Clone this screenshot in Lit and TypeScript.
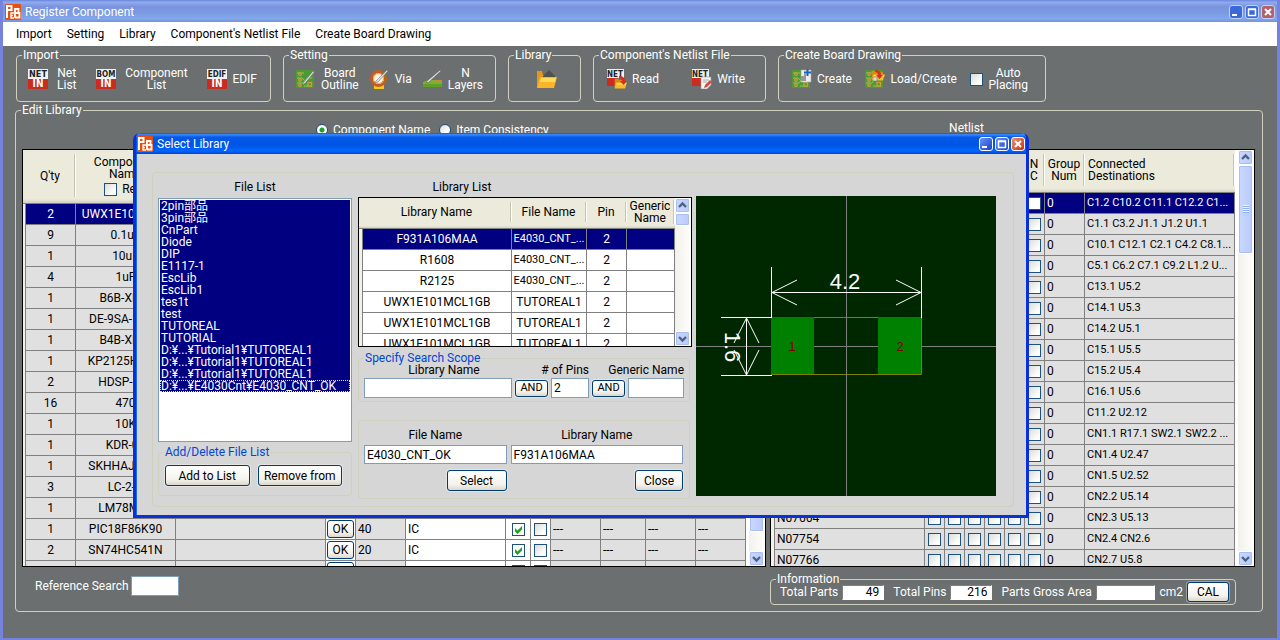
import { LitElement, html, css, svg, nothing } from "lit";
import { customElement, property } from "lit/decorators.js";
import { classMap } from "lit/directives/class-map.js";

const controls = css`
  * { box-sizing: border-box; }
  button, input { font: inherit; color: inherit; margin: 0; }
  fieldset { margin: 0; padding: 0; min-width: 0; border: 1px solid #d0d0bf; border-radius: 4px; }
  legend { margin-left: 5px; padding: 0 1px; line-height: 12px; }
  .push {
    height: 21px; padding: 0 6px; border: 1px solid #003c74; border-radius: 3px; color: #000;
    background: linear-gradient(#fff, #f4f3ee 70%, #dcd7cb); line-height: 12px; white-space: nowrap;
    box-shadow: 0 0 0 1px rgba(255, 255, 255, 0.35);
  }
  .field { height: 20px; min-width: 0; padding: 0 2px; border: 1px solid #7f9db9; border-radius: 0; background: #fff; color: #000; }
  .tick {
    appearance: none; flex: none; display: block; width: 13px; height: 13px; border: 1px solid #1c5180; border-radius: 0;
    background: linear-gradient(135deg, #dcdcd7, #fff 80%);
  }
  .tick:checked {
    background: url("data:image/svg+xml,%3Csvg xmlns='http://www.w3.org/2000/svg' viewBox='0 0 11 11'%3E%3Cpath d='M2 4v3.500L4.500 10 9 5.500V2L4.500 6.500z' fill='%2321a121'/%3E%3C/svg%3E") center / 11px 11px no-repeat, #fff;
  }
  .radio {
    appearance: none; width: 12px; height: 12px; border: 1px solid #1c5180; border-radius: 50%;
    background: linear-gradient(135deg, #dcdcd7, #fff 70%);
  }
  .radio:checked { background: radial-gradient(circle, #21a121 0 2px, #fff 3px); }
`;

@customElement("caption-buttons")
class CaptionButtons extends LitElement {
  @property({ type: Boolean, reflect: true }) active = false;
  static styles = css`
    :host { display: flex; gap: 2px; }
    button { width: 14px; height: 14px; padding: 0; border: 1px solid #c3d3fb; border-radius: 3px; background: #3a69dc; }
    button svg { display: block; width: 12px; height: 12px; }
    .close { background: #b4606a; }
    :host([active]) button { border-color: #fff; background: linear-gradient(135deg, #6b93f5, #1941c8); }
    :host([active]) .close { background: linear-gradient(135deg, #ee8f74, #c9310c); }
  `;
  render() {
    return html`
      <button aria-label="Minimize"><svg viewBox="0 0 12 12"><path d="M2 8h5v2H2z" fill="#fff" /></svg></button>
      <button aria-label="Maximize"><svg viewBox="0 0 12 12"><path d="M2.500 3.500h7v6h-7zM2 3h8" fill="none" stroke="#fff" stroke-width="1.500" /></svg></button>
      <button class="close" aria-label="Close window"><svg viewBox="0 0 12 12"><path d="M3 3l6 6M9 3l-6 6" stroke="#fff" stroke-width="2" /></svg></button>
    `;
  }
}

@customElement("scroll-bar")
class ScrollBar extends LitElement {
  @property({ type: Number }) length = 0;
  @property({ type: Boolean }) grip = false;
  static styles = css`
    :host { display: flex; flex-direction: column; flex: none; width: 16px; background: linear-gradient(90deg, #f3f1ec, #fefefb); }
    button, .thumb { border: 1px solid #fff; border-radius: 2px; background: linear-gradient(90deg, #c9d8fd, #b9cbfa); box-shadow: inset 0 0 0 1px #a9bff2; }
    button { flex: none; width: 15px; height: 15px; padding: 0; }
    button svg { display: block; width: 13px; height: 13px; }
    .track { flex: 1; min-height: 0; }
    .thumb { display: flex; align-items: center; justify-content: center; width: 15px; box-sizing: border-box; }
    .lines { width: 6px; height: 8px; background: repeating-linear-gradient(#eef4fe 0 1px, #8cb0f8 1px 2px); }
  `;
  render() {
    return html`
      <button aria-label="Scroll up"><svg viewBox="0 0 13 13"><path d="M3 8l3.500-3.500L10 8" fill="none" stroke="#4d6185" stroke-width="2.400" /></svg></button>
      <div class="track">
        <div class="thumb" style="height:${this.length}%">${this.grip ? html`<div class="lines"></div>` : nothing}</div>
      </div>
      <button aria-label="Scroll down"><svg viewBox="0 0 13 13"><path d="M3 5l3.500 3.500L10 5" fill="none" stroke="#4d6185" stroke-width="2.400" /></svg></button>
    `;
  }
}

const logo = html`<svg class="logo" viewBox="0 0 16 16" aria-hidden="true">
  <rect width="16" height="16" rx="1" fill="#e84e0c" />
  <g fill="none" stroke="#fff"><path d="M2 14V2h4.500v4H2" stroke-width="2" /><path d="M9 9H6v5h3M6 11.500h2" stroke-width="1.300" /><path d="M10 14V5h3.500v4H10M10 9h4.500v4.500H10" stroke-width="1.800" /></g>
</svg>`;

const word = (text: string, x: number, y: number, size: number, fill: string) => svg`
  <text x=${x} y=${y} text-anchor="middle" font-family="DejaVu Sans Condensed, Liberation Sans" font-weight="bold" font-size=${size} fill=${fill}>${text}</text>`;

const tagIcon = (text: string, size: number) => html`<svg class="icon" viewBox="0 0 20 20" aria-hidden="true">
  <rect width="20" height="10" fill="#f2f2f2" /><rect y="10" width="20" height="10" fill="#cb2c20" />
  ${word(text, 10, 8, size, "#222")}${word("IN", 10, 18, 10, "#fff")}
</svg>`;

const boardShape = svg`<rect y="1" width="18" height="18" fill="#4b9a35" />
  <path d="M1 4h7M1 9h5l3 3M1 14h6l4-5h5M8 17h8" stroke="#85c95a" fill="none" />
  <g fill="#4b9a35" stroke="#d59a3c" stroke-width="1.300"><circle cx="4" cy="5" r="1.300" /><circle cx="4" cy="11" r="1.300" /><circle cx="4" cy="16" r="1.300" /><rect x="12" y="13.500" width="3.500" height="3.500" /></g>`;
const pen = svg`<path d="M7 14L17 2l1.500 1L9 14.500l-3 1.500z" fill="#ddd" stroke="#666" stroke-width=".6" />`;
const folder = svg`<path d="M1 3h6l1 2h9v13H1z" fill="#d98914" /><path d="M3 9h17l-3 10H1z" fill="#fdb928" /><path d="M4 10h15l-1 3H4z" fill="#ffd95c" />`;
const arrow = svg`<path d="M10 1c4 0 6 2 6 5h2l-3.500 4L11 6h2c0-2-1-3-3-3z" fill="#d62f22" />`;

const icons: Record<string, unknown> = {
  net: tagIcon("NET", 9),
  bom: tagIcon("BOM", 8),
  edif: tagIcon("EDIF", 8),
  board: html`<svg class="icon" viewBox="0 0 20 20">${boardShape}${pen}</svg>`,
  via: html`<svg class="icon" viewBox="0 0 20 20"><path d="M10 4h8v9h-5z" fill="#3f8f31" /><path d="M4 16h10v4H4z" fill="#f5c81c" />
    <circle cx="8.500" cy="9.500" r="7" fill="#fff1dc" stroke="#c55b23" stroke-width="3" /><circle cx="8.500" cy="9.500" r="5" fill="none" stroke="#e8a33a" /><path d="M6 12L17 1l1 1L8 13l-3 1z" fill="#ddd" stroke="#777" stroke-width=".6" /></svg>`,
  layers: html`<svg class="icon" viewBox="0 0 20 20"><path d="M0 13l5-2h14v6H0z" fill="#74b52c" /><path d="M0 15h19v3H0z" fill="#5f9f26" /><path d="M11 11h8v2h-8z" fill="#c08c3c" /><path d="M4 12L17 1l1 1L6 13l-3 1z" fill="#ddd" stroke="#555" stroke-width=".5" /></svg>`,
  open: html`<svg class="icon" viewBox="0 0 20 20"><path d="M0 2h5l1 4h10v12H0z" fill="#e8951c" /><path d="M6 7l6-6 6 6v3H6z" fill="#505050" /><path d="M3 8h17l-3 11H0z" fill="#fcb526" /><path d="M4 9h15l-1 4H3z" fill="#ffdb55" /></svg>`,
  read: html`<svg class="icon" viewBox="0 0 20 20"><rect width="17" height="9" fill="#f2f2f2" /><rect y="9" width="11" height="8" fill="#cb2c20" />${word("NET", 8, 8, 8, "#222")}
    <g transform="translate(7 8) scale(.65 .6)">${folder}</g><g transform="translate(2 6)">${arrow}</g></svg>`,
  write: html`<svg class="icon" viewBox="0 0 20 20"><rect width="17" height="9" fill="#f2f2f2" /><rect y="9" width="9" height="8" fill="#cb2c20" />${word("NET", 8, 8, 8, "#222")}
    <path d="M9 8h10v8l-4 4H9z" fill="#f5f5f5" stroke="#999" stroke-width=".6" /><path d="M11 11h6M11 13h4" stroke="#aaa" /><path d="M18 11l2 2-5 5-3 1 1-3z" fill="#d8483a" /></svg>`,
  create: html`<svg class="icon" viewBox="0 0 20 20">${boardShape}<path d="M9 1h10v12H9z" fill="#eee" stroke="#aaa" stroke-width=".6" /><path d="M9 10V7h3V5h2v7H9z" fill="#999" /><path d="M15.500 0v7M12 3.500h7" stroke="#1767b5" stroke-width="2" /></svg>`,
  load: html`<svg class="icon" viewBox="0 0 20 20">${boardShape}<g transform="translate(6 0) scale(.7 .6)">${folder}</g><path d="M8 8h4v4H8z" fill="#ddd" stroke="#777" stroke-width=".6" />${arrow}</svg>`,
};

const tool = (icon: string, lines: string[], wide = false) => html`
  <button class=${classMap({ tool: true, wide })} aria-label=${lines.join(" ") || "Library"}>
    ${icons[icon]}${lines.length ? html`<span>${lines.map((l, i) => html`${i ? html`<br />` : nothing}${l}`)}</span>` : nothing}
  </button>`;

interface Part { qty: number | string; name: string; pins?: number; type?: string; }
const parts: Part[] = [
  { qty: 2, name: "UWX1E101MC..." }, { qty: 9, name: "0.1uF" }, { qty: 1, name: "10uF" }, { qty: 4, name: "1uF" },
  { qty: 1, name: "B6B-XH-A" }, { qty: 1, name: "DE-9SA-1A3N" }, { qty: 1, name: "B4B-XH-A" }, { qty: 1, name: "KP2125HS-A3" },
  { qty: 2, name: "HDSP-521" }, { qty: 16, name: "470" }, { qty: 1, name: "10K" }, { qty: 1, name: "KDR-08" },
  { qty: 1, name: "SKHHAJA010" }, { qty: 3, name: "LC-2-G" }, { qty: 1, name: "LM78M05" },
  { qty: 1, name: "PIC18F86K90", pins: 40, type: "IC" }, { qty: 2, name: "SN74HC541N", pins: 20, type: "IC" }, { qty: "", name: "" },
];

const nets: [string, string][] = [
  ["", "C1.2 C10.2 C11.1 C12.2 C1..."], ["", "C1.1 C3.2 J1.1 J1.2 U1.1"], ["", "C10.1 C12.1 C2.1 C4.2 C8.1..."],
  ["", "C5.1 C6.2 C7.1 C9.2 L1.2 U..."], ["", "C13.1 U5.2"], ["", "C14.1 U5.3"], ["", "C14.2 U5.1"],
  ["", "C15.1 U5.5"], ["", "C15.2 U5.4"], ["", "C16.1 U5.6"], ["", "C11.2 U2.12"],
  ["", "CN1.1 R17.1 SW2.1 SW2.2 ..."], ["", "CN1.4 U2.47"], ["", "CN1.5 U2.52"], ["", "CN2.2 U5.14"],
  ["N07664", "CN2.3 U5.13"], ["N07754", "CN2.4 CN2.6"], ["N07766", "CN2.7 U5.8"],
];

const libraries = [
  ["F931A106MAA", "E4030_CNT_..."], ["R1608", "E4030_CNT_..."], ["R2125", "E4030_CNT_..."],
  ["UWX1E101MCL1GB", "TUTOREAL1"], ["UWX1E101MCL1GB", "TUTOREAL1"], ["UWX1E101MCL1GB", "TUTOREAL1"],
];

const files = [
  "2pin部品", "3pin部品", "CnPart", "Diode", "DIP", "E1117-1", "EscLib", "EscLib1", "tes1t", "test", "TUTOREAL", "TUTORIAL",
  "D:¥...¥Tutorial1¥TUTOREAL1", "D:¥...¥Tutorial1¥TUTOREAL1", "D:¥...¥Tutorial1¥TUTOREAL1", "D:¥...¥E4030Cnt¥E4030_CNT_OK",
];

const tableStyles = css`
  .grid { display: flex; min-height: 0; overflow: hidden; border: 1px solid #000; background: #fff; }
  .rows { flex: 1; min-width: 0; overflow: hidden; color: #000; }
  .grid > .gap { margin-left: 3px; }
  table { width: 100%; table-layout: fixed; border-collapse: separate; border-spacing: 0; line-height: 12px; }
  th, td { padding: 0; overflow: hidden; white-space: nowrap; text-align: center; }
  th { font-weight: normal; background: linear-gradient(#ebeadb 92%, #d6d2c2); color: #000; border-bottom: 1px solid #808080; }
  th > div { display: flex; flex-direction: column; align-items: center; justify-content: center; gap: 3px; border-right: 1px solid #c7c5b2; box-shadow: 1px 0 #fff; margin: 4px 1px 6px 0; }
  th > div.start { align-items: flex-start; padding-left: 3px; text-align: left; }
  td { height: 21px; border-right: 1px solid #808080; border-bottom: 1px solid #808080; background: #e0e0e0; }
  td.left { text-align: left; padding-left: 2px; }
  td.small { font-size: 11px; }
  td.white, .light td { background: #fff; }
  .picked td, .light .picked td { background: #000080; color: #fff; }
  .picked .tick { background: #fff; }
  td.lead, .picked td.lead, .light .picked td.lead { background: #f4f2e8; border-bottom: 0; }
  td .tick { margin: 0 auto; }
`;

@customElement("select-library")
class SelectLibrary extends LitElement {
  static styles = [controls, tableStyles, css`
    :host { display: block; border: 3px solid #0831d9; border-top: 0; border-radius: 7px 7px 0 0; background: #d6d6d6; box-shadow: inset 1px 0 #166aee; }
    .title { display: flex; align-items: center; gap: 4px; height: 21px; padding: 0 1px; border-radius: 5px 5px 0 0; color: #fff;
      background: linear-gradient(#0a4fe0, #3a8cf8 8%, #0558e8 20%, #0054e3 55%, #0066ff 85%, #0045d0); }
    .title b { flex: 1; font-weight: normal; }
    .logo { width: 16px; height: 16px; }
    .body { margin: 18px 12px 8px 16px; padding: 8px 17px 7px 5px; border: 1px solid #d0d0bf; border-radius: 4px;
      display: grid; grid-template-columns: 196px minmax(0, 1fr) 300px; column-gap: 4px; }
    .col { display: flex; flex-direction: column; min-width: 0; }
    .side { padding-right: 2px; }
    .caption { height: 16px; text-align: center; line-height: 12px; }
    .mid .caption { padding-right: 126px; }
    ul { margin: 1px 0 0; padding: 1px; height: 244px; list-style: none; border: 1px solid #7f9db9; background: #fff; overflow: hidden; }
    li { height: 12px; padding-left: 1px; line-height: 12px; color: #fff; background: #000080; white-space: nowrap; overflow: hidden; }
    li:last-child { outline: 1px dotted #e8e8a0; outline-offset: -1px; }
    legend { color: #0046d5; }
    .files { margin-top: 4px; }
    .files div { display: flex; gap: 8px; padding: 7px 9px 9px 6px; }
    .files button { flex: 1; padding: 0; }
    .grid { height: 150px; }
    th > div { height: 20px; }
    th .two { margin: 2px 1px 4px 0; height: 24px; }
    .scope { margin: 5px 2px 0 0; }
    .scope div { display: grid; grid-template-columns: minmax(0, 1fr) 33px 38px 33px 56px; column-gap: 3px; align-items: center; padding: 0 5px 3px; text-align: center; row-gap: 2px; }
    .scope label { line-height: 12px; white-space: nowrap; display: flex; justify-content: center; }
    .scope .name { padding-left: 12px; }
    .scope .push { height: 17px; padding: 0; font-size: 11px; }
    .scope .pins { grid-column: 2 / 4; justify-content: flex-end; }
    .scope .gen { grid-column: 4 / 6; justify-content: flex-end; }
    .result { margin: 18px 2px 0 0; padding: 8px 6px 7px 5px; display: grid; grid-template-columns: minmax(0, 143fr) minmax(0, 173fr); gap: 4px; text-align: center; line-height: 12px; }
    .result .field { height: 19px; }
    .result .push { justify-self: end; margin-top: 2px; }
    .select { width: 60px; }
    .close { width: 48px; }
    svg.board { display: block; margin-top: 15px; width: 300px; height: 300px; background: #002800; }
  `];

  render() {
    return html`
      <div class="title">${logo}<b>Select Library</b><caption-buttons active></caption-buttons></div>
      <div class="body">
        <div class="col side">
          <div class="caption">File List</div>
          <ul>${files.map((f) => html`<li>${f}</li>`)}</ul>
          <fieldset class="files">
            <legend>Add/Delete File List</legend>
            <div><button class="push">Add to List</button><button class="push">Remove from</button></div>
          </fieldset>
        </div>
        <div class="col mid">
          <div class="caption">Library List</div>
          <div class="grid">
            <div class="rows">
              <table>
                <colgroup><col style="width:4px" /><col /><col style="width:75px" /><col style="width:40px" /><col style="width:48px" /></colgroup>
                <thead><tr><th></th><th><div>Library Name</div></th><th><div>File Name</div></th><th><div>Pin</div></th><th><div class="two"><span>Generic<br />Name</span></div></th></tr></thead>
                <tbody class="light">
                  ${libraries.map(([name, file], i) => html`<tr class=${i ? "" : "picked"}><td class="lead"></td><td>${name}</td><td class=${classMap({ small: file.length > 10 })}>${file}</td><td>2</td><td></td></tr>`)}
                </tbody>
              </table>
            </div>
            <scroll-bar .length=${11}></scroll-bar>
          </div>
          <fieldset class="scope">
            <legend>Specify Search Scope</legend>
            <div>
              <label class="name" for="s-lib">Library Name</label><label class="pins" for="s-pin"># of Pins</label><label class="gen" for="s-gen">Generic Name</label>
              <input class="field" id="s-lib" /><button class="push">AND</button><input class="field" id="s-pin" value="2" />
              <button class="push">AND</button><input class="field" id="s-gen" />
            </div>
          </fieldset>
          <fieldset class="result">
            <label for="r-file">File Name</label><label for="r-lib">Library Name</label>
            <input class="field" id="r-file" value="E4030_CNT_OK" /><input class="field" id="r-lib" value="F931A106MAA" />
            <button class="push select">Select</button><button class="push close">Close</button>
          </fieldset>
        </div>
        <svg class="board" viewBox="0 0 300 300" role="img" aria-label="Footprint">
          <path d="M150.500 0v300M0 150.500h300" stroke="#808080" />
          <path d="M118 121.500h107.500v57H75" fill="none" stroke="#808000" />
          <path d="M75 121h43v57H75zM182 121h43v57h-43z" fill="#008000" />
          <path d="M150.500 121v58" stroke="#808080" />
          <g fill="none" stroke="#fff">
            <path d="M75.500 71v51M225.500 71v51M75.500 96.500h150M101 84L76 96.500 101 109M200 84l25 12.500L200 109M25 121.500h51M25 179.500h51M50.500 122v57M38 147l12.500-25L63 147M38 154l12.500 25L63 154" />
          </g>
          <g font-family="Liberation Sans">
            <text x="149" y="93" text-anchor="middle" font-size="22" fill="#fff">4.2</text>
            <text transform="translate(29 151) rotate(90)" text-anchor="middle" font-size="22" fill="#fff">1.6</text>
            <text x="96" y="155" text-anchor="middle" font-size="13" fill="#800000">1</text>
            <text x="204" y="155" text-anchor="middle" font-size="13" fill="#800000">2</text>
          </g>
        </svg>
      </div>
    `;
  }
}

@customElement("app-root")
class AppRoot extends LitElement {
  static styles = [controls, tableStyles, css`
    :host { display: flex; flex-direction: column; position: relative; height: 100vh; overflow: hidden; box-sizing: border-box; border: solid #7583dd; border-width: 0 3px 2px;
      background: #6b6f6f; color: #fff; font: 12px/12px Roboto, "Noto Sans CJK JP", sans-serif; }
    .title { display: flex; align-items: center; gap: 4px; flex: none; height: 22px; padding: 1px 2px 0 2px;
      background: linear-gradient(#6b84e0, #90acec 10%, #7a93df 30%, #7b9ae2 60%, #82a8ec 85%, #7790dc); }
    .title b { flex: 1; font-weight: normal; }
    .logo { width: 16px; height: 16px; }
    nav { display: flex; align-items: center; gap: 15px; flex: none; height: 24px; padding-left: 13px; background: #fff; }
    nav a { color: #000; text-decoration: none; white-space: nowrap; }
    .tools { display: flex; gap: 12px; flex: none; margin: 3px 13px 0; }
    .tools fieldset { height: 53px; flex: none; }
    .strip { display: flex; align-items: center; justify-content: space-between; height: 36px; }
    .tool { display: flex; align-items: center; gap: 5px; padding: 0; border: 0; background: none; line-height: 12px; text-align: center; white-space: nowrap; }
    .wide { gap: 9px; }
    .icon { width: 20px; height: 20px; flex: none; }
    .auto { display: flex; align-items: center; gap: 5px; text-align: center; }
    .import { width: 255px; } .import .strip { padding: 0 13px 0 11px; }
    .setting { width: 213px; } .setting .strip { padding: 0 12px; }
    .library { width: 73px; } .library .strip { justify-content: center; padding-left: 4px; }
    .netlist { width: 173px; } .netlist .strip { padding: 0 20px 0 13px; }
    .create { width: 268px; } .create .strip { padding: 0 17px 0 13px; }
    .edit { flex: 1; min-height: 0; display: flex; flex-direction: column; margin: 2px 14px 26px 12px; }
    .edit > .work { flex: 1; min-height: 0; display: grid; grid-template-columns: minmax(0, 744fr) minmax(0, 485fr); grid-template-rows: 33px minmax(0, 1fr) auto; column-gap: 4px; padding: 0 7px 0 6px; }
    .modes { display: flex; align-items: flex-start; gap: 9px; padding: 8px 0 0 294px; }
    .modes label { display: flex; align-items: center; gap: 5px; }
    .nets { padding: 6px 92px 0 0; text-align: center; }
    .foot { display: flex; align-items: flex-start; }
    .search { display: flex; align-items: center; gap: 2px; padding: 9px 0 0 13px; }
    .search input { width: 48px; }
    .info { margin: 6px 19px 6px 0; width: 100%; }
    .info .line { display: flex; align-items: center; gap: 4px; margin-top: -3px; padding: 0 6px 2px 9px; white-space: nowrap; }
    .info .field { width: 42px; height: 15px; border-color: #808080 #fff #fff #808080; text-align: right; }
    .info .num { margin-right: 5px; padding-right: 4px; }
    .info .area { flex: 1; }
    .info .push { width: 42px; height: 20px; }
    .parts th > div { height: 43px; }
    .dest th > div { height: 32px; }
    .cap { display: flex; gap: 5px; align-items: center; }
    .ok { display: block; width: 27px; height: 18px; padding: 0; margin: 0 auto; }
    select-library { position: absolute; left: 130px; top: 133px; width: 896px; color: #000; }
  `];

  render() {
    const tick = (on = false) => html`<input class="tick" type="checkbox" aria-label="Enable" .checked=${on} />`;
    return html`
      <div class="title">${logo}<b>Register Component</b><caption-buttons></caption-buttons></div>
      <nav>${["Import", "Setting", "Library", "Component's Netlist File", "Create Board Drawing"].map((m) => html`<a href="#">${m}</a>`)}</nav>
      <div class="tools">
        <fieldset class="import"><legend>Import</legend><div class="strip">${tool("net", ["Net", "List"], true)}${tool("bom", ["Component", "List"], true)}${tool("edif", ["EDIF"])}</div></fieldset>
        <fieldset class="setting"><legend>Setting</legend><div class="strip">${tool("board", ["Board", "Outline"])}${tool("via", ["Via"])}${tool("layers", ["N", "Layers"])}</div></fieldset>
        <fieldset class="library"><legend>Library</legend><div class="strip">${tool("open", [])}</div></fieldset>
        <fieldset class="netlist"><legend>Component's Netlist File</legend><div class="strip">${tool("read", ["Read"])}${tool("write", ["Write"])}</div></fieldset>
        <fieldset class="create"><legend>Create Board Drawing</legend><div class="strip">${tool("create", ["Create"])}${tool("load", ["Load/Create"])}
          <label class="auto"><input class="tick" type="checkbox" /><span>Auto<br />Placing</span></label></div></fieldset>
      </div>
      <fieldset class="edit">
        <legend>Edit Library</legend>
        <div class="work">
          <div class="modes">
            <label><input class="radio" type="radio" name="mode" checked />Component Name</label>
            <label><input class="radio" type="radio" name="mode" />Item Consistency</label>
          </div>
          <div class="nets">Netlist</div>
          <div class="grid">
            <div class="rows">
              <table class="parts">
                <colgroup>${[3, 50, 100, 0, 30, 50, 100, 25, 20, 50, 45, 50, 50].map((w) => html`<col style=${w ? `width:${w}px` : ""} />`)}</colgroup>
                <thead><tr><th></th><th><div>Q'ty</div></th><th><div><span>Component<br />Name</span><label class="cap">${tick()}Reg.</label></div></th>${Array.from({ length: 10 }, () => html`<th><div></div></th>`)}</tr></thead>
                <tbody>${parts.map((p, i) => html`<tr class=${i ? "" : "picked"}>
                  <td class="lead"></td><td>${p.qty}</td><td>${p.name}</td><td></td><td class="white">${p.pins || !p.name ? html`<button class="push ok">${p.pins ? "OK" : nothing}</button>` : nothing}</td>
                  <td class="left">${p.pins}</td><td class="left white">${p.type}</td><td class="white">${tick(!!p.pins)}</td><td class="white">${tick()}</td>
                  ${[0, 1, 2, 3].map(() => html`<td class="left">${p.pins ? "---" : nothing}</td>`)}</tr>`)}</tbody>
              </table>
            </div>
            <scroll-bar class="gap" .length=${95}></scroll-bar>
          </div>
          <div class="grid">
            <div class="rows">
              <table class="dest">
                <colgroup>${[4, 150, 20, 20, 20, 20, 20, 20, 40, 0].map((w) => html`<col style=${w ? `width:${w}px` : ""} />`)}</colgroup>
                <thead><tr><th></th><th><div></div></th>${[0, 1, 2, 3, 4].map(() => html`<th><div></div></th>`)}<th><div><span>N<br />C</span></div></th>
                  <th><div>Group<br />Num</div></th><th><div class="start"><span>Connected<br />Destinations</span></div></th></tr></thead>
                <tbody>${nets.map(([net, to], i) => html`<tr class=${i ? "" : "picked"}><td class="lead"></td><td class="left">${net}</td>
                  ${[0, 1, 2, 3, 4, 5].map(() => html`<td>${tick()}</td>`)}<td class="left">0</td><td class="left small">${to}</td></tr>`)}</tbody>
              </table>
            </div>
            <scroll-bar class="gap" .length=${23} grip></scroll-bar>
          </div>
          <div class="foot"><label class="search">Reference Search<input class="field" /></label></div>
          <div class="foot">
            <fieldset class="info"><legend>Information</legend>
              <div class="line">
                <label for="i-parts">Total Parts</label><input class="field num" id="i-parts" value="49" />
                <label for="i-pins">Total Pins</label><input class="field num" id="i-pins" value="216" />
                <label for="i-area">Parts Gross Area</label><input class="field area" id="i-area" />cm2
                <button class="push">CAL</button>
              </div>
            </fieldset>
          </div>
        </div>
      </fieldset>
      <select-library></select-library>
    `;
  }
}
